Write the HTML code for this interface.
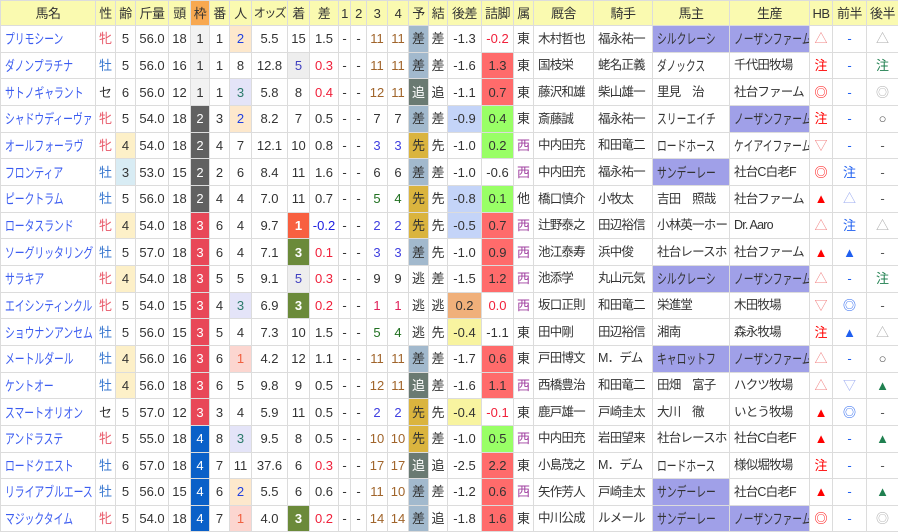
<!DOCTYPE html>
<html><head><meta charset="utf-8"><style>
body{margin:0;background:#fff;width:898px;height:532px;overflow:hidden}
table{border-collapse:collapse;table-layout:fixed;width:898px;font-family:"Liberation Sans","Noto Sans CJK JP",sans-serif;font-size:13px;color:#333}
td,th{border:1px solid #dcdcdc;padding:0;text-align:center;white-space:nowrap;overflow:hidden;line-height:1;vertical-align:middle}
th{height:24px;background:#fafab0;font-weight:normal;color:#333;font-size:13px;letter-spacing:-0.5px}
th.o{letter-spacing:-1.5px;font-size:12px}
th.w{background:#f8a850}
tr.r td{height:25.67px}
td.n{text-align:left;padding-left:4px;color:#3b5cf0}
td.l{text-align:left;padding-left:4px;font-size:12.5px;letter-spacing:-0.8px}
td.k{text-align:left;padding-left:4px}
i{font-style:normal;display:inline-block;transform:scaleX(.7);transform-origin:0 50%;font-size:14px;line-height:16px;vertical-align:middle;margin-top:1px}
.f{color:#e85868}.m{color:#3a78d0}
.y4{background:#fdf0c8}.b3{background:#d8ecf4}
.k1{background:#f2f2f2}.k2{background:#616161;color:#fff}.k3{background:#e84858;color:#fff}.k4{background:#0a60c8;color:#fff}
.p1{background:#fcd6d0;color:#f06040}.p2{background:#fde8cc;color:#2040e0}.p3{background:#e4e4f8;color:#2a7a6a}
.a1{background:#f86040;color:#fff;font-weight:bold}.a3{background:#6b8a3a;color:#fff;font-weight:bold}.a5{background:#eee;color:#4040c0}
.rd{color:#f0203a}.bl{color:#2020e0}
.br{color:#a0642a}.pb{color:#4040e0}.gr{color:#207020}.pk{color:#e0205a}
.ys{background:#a2b9cd}.yo{background:#6a7a72;color:#fff}.ys2{background:#dab43e}
.lb{background:#c4d4f8}.or{background:#f0b07a}.yl{background:#f8f4a0}
.R{background:#ff6b6b}.G{background:#99ff66}
.w2{color:#a040a0}
.pu{background:#a0a0e8}
.hp{color:#f08080}.hr{color:#f00}
.qb{color:#2060f0}.ql{color:#9aaaf0}
.zg{color:#aaa}.zG{color:#208050}.zd{color:#555}
</style></head><body>
<table>
<colgroup><col style="width:95px"><col style="width:20px"><col style="width:20px"><col style="width:33px"><col style="width:22px"><col style="width:19px"><col style="width:20px"><col style="width:22px"><col style="width:36px"><col style="width:22px"><col style="width:29px"><col style="width:12px"><col style="width:16px"><col style="width:21px"><col style="width:21px"><col style="width:20px"><col style="width:19px"><col style="width:34px"><col style="width:32px"><col style="width:20px"><col style="width:60px"><col style="width:59px"><col style="width:77px"><col style="width:80px"><col style="width:23px"><col style="width:34px"><col style="width:32px"></colgroup>
<tr><th>馬名</th><th>性</th><th>齢</th><th>斤量</th><th>頭</th><th class="w">枠</th><th>番</th><th>人</th><th class="o">オッズ</th><th>着</th><th>差</th><th>1</th><th>2</th><th>3</th><th>4</th><th>予</th><th>結</th><th>後差</th><th>詰脚</th><th>属</th><th>厩舎</th><th>騎手</th><th>馬主</th><th>生産</th><th>HB</th><th>前半</th><th>後半</th></tr>
<tr class="r"><td class="n"><i>プリモシーン</i></td><td class="f">牝</td><td>5</td><td>56.0</td><td>18</td><td class="k1">1</td><td>1</td><td class="p2">2</td><td>5.5</td><td>15</td><td>1.5</td><td>-</td><td>-</td><td class="br">11</td><td class="br">11</td><td class="ys">差</td><td>差</td><td>-1.3</td><td class="rd">-0.2</td><td>東</td><td class="l">木村哲也</td><td class="l">福永祐一</td><td class="k pu"><i>シルクレーシ</i></td><td class="k pu"><i>ノーザンファーム</i></td><td class="hp">△</td><td class="qb">-</td><td class="zg">△</td></tr>
<tr class="r"><td class="n"><i>ダノンプラチナ</i></td><td class="m">牡</td><td>5</td><td>56.0</td><td>16</td><td class="k1">1</td><td>1</td><td>8</td><td>12.8</td><td class="a5">5</td><td class="rd">0.3</td><td>-</td><td>-</td><td class="br">11</td><td class="br">11</td><td class="ys">差</td><td>差</td><td>-1.6</td><td class="R">1.3</td><td>東</td><td class="l">国枝栄</td><td class="l">蛯名正義</td><td class="k"><i>ダノックス</i></td><td class="l">千代田牧場</td><td class="hr">注</td><td class="qb">-</td><td class="zG">注</td></tr>
<tr class="r"><td class="n"><i>サトノギャラント</i></td><td>セ</td><td>6</td><td>56.0</td><td>12</td><td class="k1">1</td><td>1</td><td class="p3">3</td><td>5.8</td><td>8</td><td class="rd">0.4</td><td>-</td><td>-</td><td class="br">12</td><td class="br">11</td><td class="yo">追</td><td>追</td><td>-1.1</td><td class="R">0.7</td><td>東</td><td class="l">藤沢和雄</td><td class="l">柴山雄一</td><td class="l">里見　治</td><td class="l">社台ファーム</td><td class="hr">◎</td><td class="qb">-</td><td class="zg">◎</td></tr>
<tr class="r"><td class="n"><i>シャドウディーヴァ</i></td><td class="f">牝</td><td>5</td><td>54.0</td><td>18</td><td class="k2">2</td><td>3</td><td class="p2">2</td><td>8.2</td><td>7</td><td>0.5</td><td>-</td><td>-</td><td>7</td><td>7</td><td class="ys">差</td><td>差</td><td class="lb">-0.9</td><td class="G">0.4</td><td>東</td><td class="l">斎藤誠</td><td class="l">福永祐一</td><td class="k"><i>スリーエイチ</i></td><td class="k pu"><i>ノーザンファーム</i></td><td class="hr">注</td><td class="qb">-</td><td class="zd">○</td></tr>
<tr class="r"><td class="n"><i>オールフォーラヴ</i></td><td class="f">牝</td><td class="y4">4</td><td>54.0</td><td>18</td><td class="k2">2</td><td>4</td><td>7</td><td>12.1</td><td>10</td><td>0.8</td><td>-</td><td>-</td><td class="pb">3</td><td class="pb">3</td><td class="ys2">先</td><td>先</td><td>-1.0</td><td class="G">0.2</td><td class="w2">西</td><td class="l">中内田充</td><td class="l">和田竜二</td><td class="k"><i>ロードホース</i></td><td class="k"><i>ケイアイファーム</i></td><td class="hp">▽</td><td class="qb">-</td><td class="zd">-</td></tr>
<tr class="r"><td class="n"><i>フロンティア</i></td><td class="m">牡</td><td class="b3">3</td><td>53.0</td><td>15</td><td class="k2">2</td><td>2</td><td>6</td><td>8.4</td><td>11</td><td>1.6</td><td>-</td><td>-</td><td>6</td><td>6</td><td class="ys">差</td><td>差</td><td>-1.0</td><td>-0.6</td><td class="w2">西</td><td class="l">中内田充</td><td class="l">福永祐一</td><td class="k pu"><i>サンデーレー</i></td><td class="l">社台C白老F</td><td class="hr">◎</td><td class="qb">注</td><td class="zd">-</td></tr>
<tr class="r"><td class="n"><i>ピークトラム</i></td><td class="m">牡</td><td>5</td><td>56.0</td><td>18</td><td class="k2">2</td><td>4</td><td>4</td><td>7.0</td><td>11</td><td>0.7</td><td>-</td><td>-</td><td class="gr">5</td><td class="gr">4</td><td class="ys2">先</td><td>先</td><td class="lb">-0.8</td><td class="G">0.1</td><td>他</td><td class="l">橋口慎介</td><td class="l">小牧太</td><td class="l">吉田　照哉</td><td class="l">社台ファーム</td><td class="hr">▲</td><td class="ql">△</td><td class="zd">-</td></tr>
<tr class="r"><td class="n"><i>ロータスランド</i></td><td class="f">牝</td><td class="y4">4</td><td>54.0</td><td>18</td><td class="k3">3</td><td>6</td><td>4</td><td>9.7</td><td class="a1">1</td><td class="bl">-0.2</td><td>-</td><td>-</td><td class="pb">2</td><td class="pb">2</td><td class="ys2">先</td><td>先</td><td class="lb">-0.5</td><td class="R">0.7</td><td class="w2">西</td><td class="l">辻野泰之</td><td class="l">田辺裕信</td><td class="l">小林英一ホー</td><td class="l">Dr. Aaro</td><td class="hp">△</td><td class="qb">注</td><td class="zg">△</td></tr>
<tr class="r"><td class="n"><i>ソーグリッタリング</i></td><td class="m">牡</td><td>5</td><td>57.0</td><td>18</td><td class="k3">3</td><td>6</td><td>4</td><td>7.1</td><td class="a3">3</td><td class="rd">0.1</td><td>-</td><td>-</td><td class="pb">3</td><td class="pb">3</td><td class="ys">差</td><td>先</td><td>-1.0</td><td class="R">0.9</td><td class="w2">西</td><td class="l">池江泰寿</td><td class="l">浜中俊</td><td class="l">社台レースホ</td><td class="l">社台ファーム</td><td class="hr">▲</td><td class="qb">▲</td><td class="zd">-</td></tr>
<tr class="r"><td class="n"><i>サラキア</i></td><td class="f">牝</td><td class="y4">4</td><td>54.0</td><td>18</td><td class="k3">3</td><td>5</td><td>5</td><td>9.1</td><td class="a5">5</td><td class="rd">0.3</td><td>-</td><td>-</td><td>9</td><td>9</td><td>逃</td><td>差</td><td>-1.5</td><td class="R">1.2</td><td class="w2">西</td><td class="l">池添学</td><td class="l">丸山元気</td><td class="k pu"><i>シルクレーシ</i></td><td class="k pu"><i>ノーザンファーム</i></td><td class="hp">△</td><td class="qb">-</td><td class="zG">注</td></tr>
<tr class="r"><td class="n"><i>エイシンティンクル</i></td><td class="f">牝</td><td>5</td><td>54.0</td><td>15</td><td class="k3">3</td><td>4</td><td class="p3">3</td><td>6.9</td><td class="a3">3</td><td class="rd">0.2</td><td>-</td><td>-</td><td class="pk">1</td><td class="pk">1</td><td>逃</td><td>逃</td><td class="or">0.2</td><td class="rd">0.0</td><td class="w2">西</td><td class="l">坂口正則</td><td class="l">和田竜二</td><td class="l">栄進堂</td><td class="l">木田牧場</td><td class="hp">▽</td><td class="qb">◎</td><td class="zd">-</td></tr>
<tr class="r"><td class="n"><i>ショウナンアンセム</i></td><td class="m">牡</td><td>5</td><td>56.0</td><td>15</td><td class="k3">3</td><td>5</td><td>4</td><td>7.3</td><td>10</td><td>1.5</td><td>-</td><td>-</td><td class="gr">5</td><td class="gr">4</td><td>逃</td><td>先</td><td class="yl">-0.4</td><td>-1.1</td><td>東</td><td class="l">田中剛</td><td class="l">田辺裕信</td><td class="l">湘南</td><td class="l">森永牧場</td><td class="hr">注</td><td class="qb">▲</td><td class="zg">△</td></tr>
<tr class="r"><td class="n"><i>メートルダール</i></td><td class="m">牡</td><td class="y4">4</td><td>56.0</td><td>16</td><td class="k3">3</td><td>6</td><td class="p1">1</td><td>4.2</td><td>12</td><td>1.1</td><td>-</td><td>-</td><td class="br">11</td><td class="br">11</td><td class="ys">差</td><td>差</td><td>-1.7</td><td class="R">0.6</td><td>東</td><td class="l">戸田博文</td><td class="l">M．デム</td><td class="k pu"><i>キャロットフ</i></td><td class="k pu"><i>ノーザンファーム</i></td><td class="hp">△</td><td class="qb">-</td><td class="zd">○</td></tr>
<tr class="r"><td class="n"><i>ケントオー</i></td><td class="m">牡</td><td class="y4">4</td><td>56.0</td><td>18</td><td class="k3">3</td><td>6</td><td>5</td><td>9.8</td><td>9</td><td>0.5</td><td>-</td><td>-</td><td class="br">12</td><td class="br">11</td><td class="yo">追</td><td>差</td><td>-1.6</td><td class="R">1.1</td><td class="w2">西</td><td class="l">西橋豊治</td><td class="l">和田竜二</td><td class="l">田畑　富子</td><td class="l">ハクツ牧場</td><td class="hp">△</td><td class="ql">▽</td><td class="zG">▲</td></tr>
<tr class="r"><td class="n"><i>スマートオリオン</i></td><td>セ</td><td>5</td><td>57.0</td><td>12</td><td class="k3">3</td><td>3</td><td>4</td><td>5.9</td><td>11</td><td>0.5</td><td>-</td><td>-</td><td class="pb">2</td><td class="pb">2</td><td class="ys2">先</td><td>先</td><td class="yl">-0.4</td><td class="rd">-0.1</td><td>東</td><td class="l">鹿戸雄一</td><td class="l">戸崎圭太</td><td class="l">大川　徹</td><td class="l">いとう牧場</td><td class="hr">▲</td><td class="qb">◎</td><td class="zd">-</td></tr>
<tr class="r"><td class="n"><i>アンドラステ</i></td><td class="f">牝</td><td>5</td><td>55.0</td><td>18</td><td class="k4">4</td><td>8</td><td class="p3">3</td><td>9.5</td><td>8</td><td>0.5</td><td>-</td><td>-</td><td class="br">10</td><td class="br">10</td><td class="ys2">先</td><td>差</td><td>-1.0</td><td class="G">0.5</td><td class="w2">西</td><td class="l">中内田充</td><td class="l">岩田望来</td><td class="l">社台レースホ</td><td class="l">社台C白老F</td><td class="hr">▲</td><td class="qb">-</td><td class="zG">▲</td></tr>
<tr class="r"><td class="n"><i>ロードクエスト</i></td><td class="m">牡</td><td>6</td><td>57.0</td><td>18</td><td class="k4">4</td><td>7</td><td>11</td><td>37.6</td><td>6</td><td class="rd">0.3</td><td>-</td><td>-</td><td class="br">17</td><td class="br">17</td><td class="yo">追</td><td>追</td><td>-2.5</td><td class="R">2.2</td><td>東</td><td class="l">小島茂之</td><td class="l">M．デム</td><td class="k"><i>ロードホース</i></td><td class="l">様似堀牧場</td><td class="hr">注</td><td class="qb">-</td><td class="zd">-</td></tr>
<tr class="r"><td class="n"><i>リライアブルエース</i></td><td class="m">牡</td><td>5</td><td>56.0</td><td>15</td><td class="k4">4</td><td>6</td><td class="p2">2</td><td>5.5</td><td>6</td><td>0.6</td><td>-</td><td>-</td><td class="br">11</td><td class="br">10</td><td class="ys">差</td><td>差</td><td>-1.2</td><td class="R">0.6</td><td class="w2">西</td><td class="l">矢作芳人</td><td class="l">戸崎圭太</td><td class="k pu"><i>サンデーレー</i></td><td class="l">社台C白老F</td><td class="hr">▲</td><td class="qb">-</td><td class="zG">▲</td></tr>
<tr class="r"><td class="n"><i>マジックタイム</i></td><td class="f">牝</td><td>5</td><td>54.0</td><td>18</td><td class="k4">4</td><td>7</td><td class="p1">1</td><td>4.0</td><td class="a3">3</td><td class="rd">0.2</td><td>-</td><td>-</td><td class="br">14</td><td class="br">14</td><td class="ys">差</td><td>追</td><td>-1.8</td><td class="R">1.6</td><td>東</td><td class="l">中川公成</td><td class="l">ルメール</td><td class="k pu"><i>サンデーレー</i></td><td class="k pu"><i>ノーザンファーム</i></td><td class="hr">◎</td><td class="qb">-</td><td class="zg">◎</td></tr>
</table>
</body></html>
